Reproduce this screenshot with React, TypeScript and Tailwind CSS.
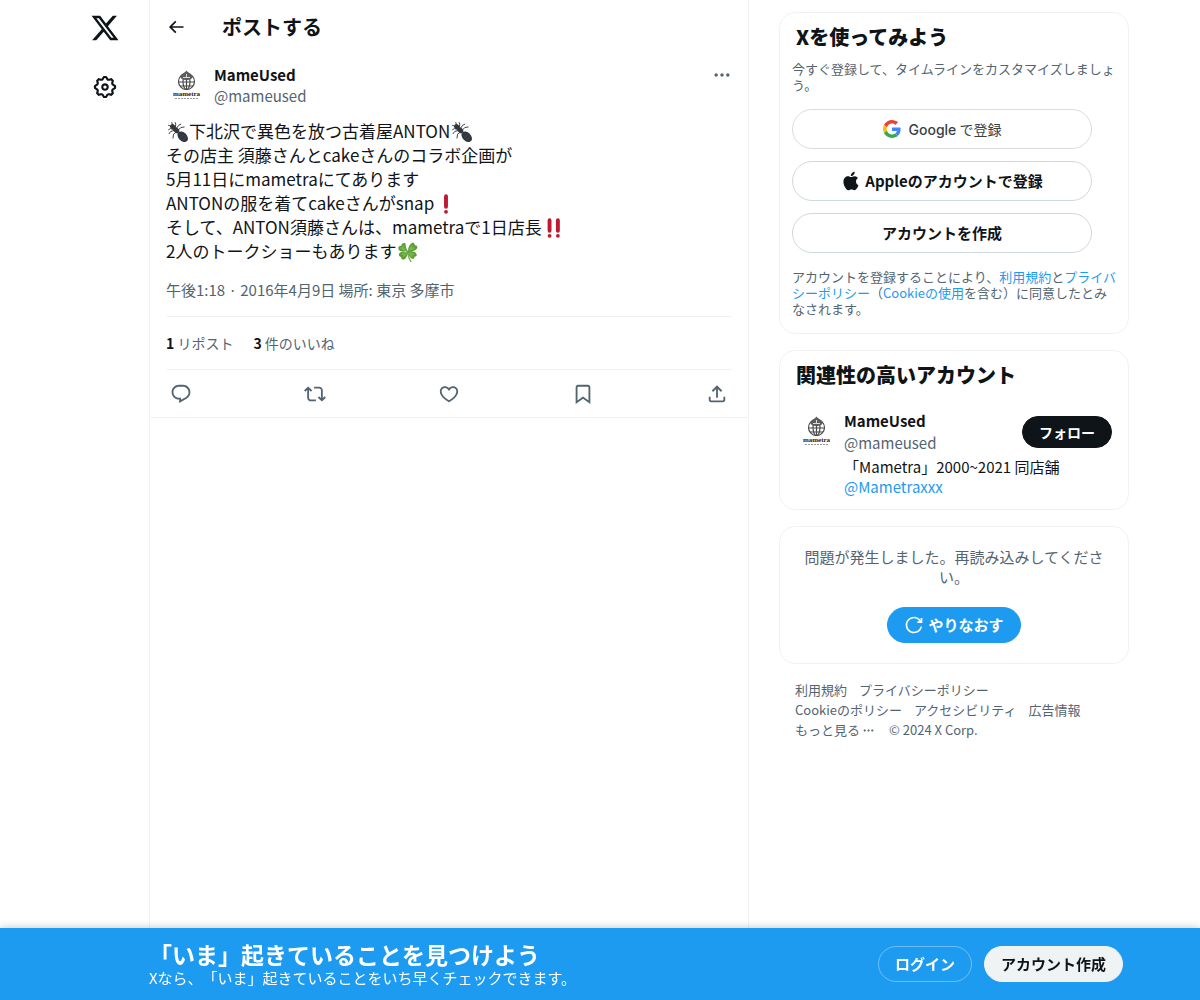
import React from 'react';

interface IconProps {
  path: string;
  className?: string;
}

const Icon: React.FC<IconProps> = ({ path, className = 'w-5 h-5' }) => (
  <svg viewBox="0 0 24 24" aria-hidden="true" className={`${className} shrink-0 fill-current`}>
    <path d={path} />
  </svg>
);

const paths = {
  logo: 'M18.244 2.25h3.308l-7.227 8.26 8.502 11.24H16.17l-5.214-6.817L4.99 21.75H1.68l7.73-8.835L1.254 2.25H8.08l4.713 6.231zm-1.161 17.52h1.833L7.084 4.126H5.117z',
  settings:
    'M10.54 1.75h2.92l1.57 2.36c.11.17.32.25.53.21l2.53-.59 2.17 2.17-.58 2.54c-.05.2.04.41.21.53l2.36 1.57v2.92l-2.36 1.57c-.17.12-.26.33-.21.53l.58 2.54-2.17 2.17-2.53-.59c-.21-.04-.42.04-.53.21l-1.57 2.36h-2.92l-1.58-2.36c-.11-.17-.32-.25-.52-.21l-2.54.59-2.17-2.17.58-2.54c.05-.2-.03-.41-.21-.53l-2.35-1.57v-2.92L4.1 8.97c.18-.12.26-.33.21-.53L3.73 5.9 5.9 3.73l2.54.59c.2.04.41-.04.52-.21l1.58-2.36zm1.07 2l-.98 1.47C10.05 6.08 9 6.5 7.99 6.27l-1.46-.34-.6.6.33 1.46c.24 1.01-.18 2.07-1.05 2.64l-1.46.98v.78l1.46.98c.87.57 1.29 1.63 1.05 2.64l-.33 1.46.6.6 1.46-.34c1.01-.23 2.06.19 2.64 1.05l.98 1.47h.78l.97-1.47c.58-.86 1.63-1.28 2.65-1.05l1.45.34.61-.6-.34-1.46c-.23-1.01.18-2.07 1.05-2.64l1.47-.98v-.78l-1.47-.98c-.87-.57-1.28-1.63-1.05-2.64l.34-1.46-.61-.6-1.45.34c-1.02.23-2.07-.19-2.65-1.05l-.97-1.47h-.78zM12 10.5c-.83 0-1.5.67-1.5 1.5s.67 1.5 1.5 1.5c.82 0 1.5-.67 1.5-1.5s-.68-1.5-1.5-1.5zM8.5 12c0-1.93 1.56-3.5 3.5-3.5 1.93 0 3.5 1.57 3.5 3.5s-1.57 3.5-3.5 3.5c-1.94 0-3.5-1.57-3.5-3.5z',
  back: 'M7.414 13l5.043 5.04-1.414 1.42L3.586 12l7.457-7.46 1.414 1.42L7.414 11H21v2H7.414z',
  more: 'M3 12c0-1.1.9-2 2-2s2 .9 2 2-.9 2-2 2-2-.9-2-2zm9 2c1.1 0 2-.9 2-2s-.9-2-2-2-2 .9-2 2 .9 2 2 2zm7 0c1.1 0 2-.9 2-2s-.9-2-2-2-2 .9-2 2 .9 2 2 2z',
  reply:
    'M1.751 10c0-4.42 3.584-8 8.005-8h4.366c4.49 0 8.129 3.64 8.129 8.13 0 2.96-1.607 5.68-4.196 7.11l-8.054 4.46v-3.69h-.067c-4.49.1-8.183-3.51-8.183-8.01zm8.005-6c-3.317 0-6.005 2.69-6.005 6 0 3.37 2.77 6.08 6.138 6.01l.351-.01h1.761v2.3l5.087-2.81c1.951-1.08 3.163-3.13 3.163-5.36 0-3.39-2.744-6.13-6.129-6.13H9.756z',
  repost:
    'M4.5 3.88l4.432 4.14-1.364 1.46L5.5 7.55V16c0 1.1.896 2 2 2H13v2H7.5c-2.209 0-4-1.79-4-4V7.55L1.432 9.48.068 8.02 4.5 3.88zM16.5 6H11V4h5.5c2.209 0 4 1.79 4 4v8.45l2.068-1.93 1.364 1.46-4.432 4.14-4.432-4.14 1.364-1.46 2.068 1.93V8c0-1.1-.896-2-2-2z',
  like: 'M16.697 5.5c-1.222-.06-2.679.51-3.89 2.16l-.805 1.09-.806-1.09C9.984 6.01 8.526 5.44 7.304 5.5c-1.243.07-2.349.78-2.91 1.91-.552 1.12-.633 2.78.479 4.82 1.074 1.97 3.257 4.27 7.129 6.61 3.87-2.34 6.052-4.64 7.126-6.61 1.111-2.04 1.03-3.7.477-4.82-.561-1.13-1.666-1.84-2.908-1.91zm4.187 7.69c-1.351 2.48-4.001 5.12-8.379 7.67l-.503.3-.504-.3c-4.379-2.55-7.029-5.19-8.382-7.67-1.36-2.5-1.41-4.86-.514-6.67.887-1.79 2.647-2.91 4.601-3.01 1.651-.09 3.368.56 4.798 2.01 1.429-1.45 3.146-2.1 4.796-2.01 1.954.1 3.714 1.22 4.601 3.01.896 1.81.846 4.17-.514 6.67z',
  bookmark:
    'M4 4.5C4 3.12 5.119 2 6.5 2h11C18.881 2 20 3.12 20 4.5v18.44l-8-5.71-8 5.71V4.5zM6.5 4c-.276 0-.5.22-.5.5v14.56l6-4.29 6 4.29V4.5c0-.28-.224-.5-.5-.5h-11z',
  share:
    'M12 2.59l5.7 5.7-1.41 1.42L13 6.41V16h-2V6.41l-3.3 3.3-1.41-1.42L12 2.59zM21 15l-.02 3.51c0 1.38-1.12 2.49-2.5 2.49H5.5C4.11 21 3 19.88 3 18.5V15h2v3.5c0 .28.22.5.5.5h12.98c.28 0 .5-.22.5-.5L19 15h2z',
  retry:
    'M12 4c-4.418 0-8 3.58-8 8s3.582 8 8 8c3.806 0 6.993-2.66 7.802-6.22l1.95.44C20.742 18.67 16.76 22 12 22 6.477 22 2 17.52 2 12S6.477 2 12 2c3.272 0 6.176 1.57 8 4V3.5h2v6h-6v-2h2.616C17.175 5.39 14.749 4 12 4z',
  apple:
    'M16.365 1.43c0 1.14-.493 2.27-1.177 3.08-.744.9-1.99 1.57-2.987 1.57-.12 0-.23-.02-.3-.03-.01-.06-.04-.22-.04-.39 0-1.15.572-2.27 1.206-2.98.804-.94 2.142-1.64 3.248-1.68.03.13.05.28.05.43zm4.565 15.71c-.03.07-.463 1.58-1.518 3.12-.945 1.34-1.94 2.71-3.43 2.71-1.517 0-1.9-.88-3.63-.88-1.698 0-2.302.91-3.67.91-1.377 0-2.332-1.26-3.428-2.8-1.287-1.82-2.323-4.63-2.323-7.28 0-4.28 2.797-6.55 5.552-6.55 1.448 0 2.675.95 3.6.95.865 0 2.222-1.01 3.902-1.01.613 0 2.886.06 4.374 2.19-.13.09-2.383 1.37-2.383 4.19 0 3.26 2.854 4.42 2.955 4.45z',
};

const GoogleIcon = () => (
  <svg viewBox="0 0 48 48" aria-hidden="true" className="w-[18px] h-[18px] shrink-0">
    <path fill="#EA4335" d="M24 9.5c3.54 0 6.71 1.22 9.21 3.6l6.85-6.85C35.9 2.38 30.47 0 24 0 14.62 0 6.51 5.38 2.56 13.22l7.98 6.19C12.43 13.72 17.74 9.5 24 9.5z" />
    <path fill="#4285F4" d="M46.98 24.55c0-1.57-.15-3.09-.38-4.55H24v9.02h12.94c-.58 2.96-2.26 5.48-4.78 7.18l7.73 6c4.51-4.18 7.09-10.36 7.09-17.65z" />
    <path fill="#FBBC05" d="M10.53 28.59c-.48-1.45-.76-2.99-.76-4.59s.27-3.14.76-4.59l-7.98-6.19C.92 16.46 0 20.12 0 24c0 3.88.92 7.54 2.56 10.78l7.97-6.19z" />
    <path fill="#34A853" d="M24 48c6.48 0 11.93-2.13 15.89-5.81l-7.73-6c-2.15 1.45-4.92 2.3-8.16 2.3-6.26 0-11.57-4.22-13.47-9.91l-7.98 6.19C6.51 42.62 14.62 48 24 48z" />
  </svg>
);

const emojiClass = 'inline-block w-5 h-5 ml-0.5 mr-px align-[-4px]';

const Ant = () => (
  <svg viewBox="0 0 36 36" role="img" aria-label="アリ" className={emojiClass}>
    <g fill="none" stroke="#31373D" strokeWidth="1.7" strokeLinecap="round" strokeLinejoin="round">
      <path d="M6 8L1 6M8 6L7 1" />
      <path d="M10 13l-6-1-3 2M12 15l-7 2-3 4M15 18l-5 4-1 7" />
      <path d="M13 10l1-6-1-3M15 12l4-6 4-2M18 15l5-5 6-1" />
    </g>
    <ellipse cx="8.500" cy="8.500" rx="5" ry="4.400" transform="rotate(45 8.500 8.500)" fill="#31373D" />
    <ellipse cx="15" cy="15" rx="6" ry="4.400" transform="rotate(45 15 15)" fill="#31373D" />
    <ellipse cx="26.500" cy="26.500" rx="11" ry="7.600" transform="rotate(45 26.500 26.500)" fill="#31373D" />
    <path d="M22 29l7-7M26 33l7-7" stroke="#55606a" strokeWidth="0.800" />
  </svg>
);

const Exclamation = () => (
  <svg viewBox="0 0 36 36" role="img" aria-label="!" className={emojiClass}>
    <circle cx="18" cy="32" r="3.400" fill="#BE1931" />
    <path d="M21.500 23a3.500 3.500 0 0 1-7 0V4a3.500 3.500 0 0 1 7 0z" fill="#BE1931" />
  </svg>
);

const DoubleExclamation = () => (
  <svg viewBox="0 0 36 36" role="img" aria-label="!!" className={emojiClass}>
    <circle cx="10" cy="32" r="3.400" fill="#BE1931" />
    <circle cx="25" cy="32" r="3.400" fill="#BE1931" />
    <path
      d="M13.500 23a3.500 3.500 0 0 1-7 0V4a3.500 3.500 0 0 1 7 0zM28.500 23a3.500 3.500 0 0 1-7 0V4a3.500 3.500 0 0 1 7 0z"
      fill="#BE1931"
    />
  </svg>
);

const Clover = () => (
  <svg viewBox="0 0 36 36" role="img" aria-label="四つ葉" className={emojiClass}>
    <path d="M17 17c1 7 2 12 6 18" fill="none" stroke="#77B255" strokeWidth="2.500" strokeLinecap="round" />
    <path
      d="M18 17C15 12 13 7 14 3c-3-3-8-1-8 4-5-1-7 4-4 8 4 3 10 3 16 2zM18 17c0-7 3-13 7-15 3-2 6 1 5 4 4-1 6 3 4 6-3 4-9 5-16 5zM18 17c-1 7-3 12-6 14-4 2-7-1-6-4-4 0-6-4-3-7 3-3 9-4 15-3zM18 17c7-1 13 0 15 4 2 3 0 6-3 5 0 4-4 6-7 3-3-3-5-7-5-12z"
      fill="#5C9E31"
    />
    <path
      d="M17 16C13 13 10 9 10 6c-2 0-3 2-2 4-2-1-4 0-4 2 4 3 8 4 13 4zM19 16c1-5 4-9 7-11 1 2 0 4-1 5 3-1 5 0 6 1-3 3-7 5-12 5zM17 18c-2 5-4 8-7 10-1-2-1-3 0-5-2 1-4 0-5-1 3-3 7-4 12-4zM19 18c5 0 9 2 11 4-1 2-3 2-4 1 1 2 0 4-2 4-3-2-4-5-5-9z"
      fill="#77B255"
    />
  </svg>
);

const Avatar = () => (
  <a href="#profile" aria-label="MameUsed" className="w-10 h-10 shrink-0 rounded-full overflow-hidden">
    <svg viewBox="0 0 40 40" className="w-10 h-10">
      <g fill="none" stroke="#4b4b4b" strokeWidth="1.2">
        <circle cx="20.500" cy="16.500" r="8" />
        <ellipse cx="20.500" cy="16.500" rx="3.500" ry="8" />
        <path d="M12.500 17h16M14 21h13M20.500 8v17" />
      </g>
      <path d="M20.500 5.500c2 3 6 3 6 6.500 0 2-3 3-6 3s-6-1-6-3c0-3.500 4-3.500 6-6.500z" fill="#5c5c5c" />
      <path d="M17 12.500h7M20.500 9v4" stroke="#ddd" strokeWidth="1" />
      <text x="20.500" y="31" textAnchor="middle" className="fill-[#222] font-['Liberation_Serif',serif] text-[7px] font-bold">
        mametra
      </text>
      <path d="M9 33.500h23" stroke="#999" strokeWidth="1" strokeDasharray="2 1" />
    </svg>
  </a>
);

const actions = [
  { label: '返信', path: paths.reply },
  { label: 'リポスト', path: paths.repost },
  { label: 'いいね', path: paths.like },
  { label: 'ブックマーク', path: paths.bookmark },
  { label: '共有', path: paths.share },
];

const Post = () => (
  <article className="border-b border-[#eff3f4] px-4">
    <div className="flex pt-3">
      <Avatar />
      <div className="ml-2 flex-1 space-y-px text-[15px] leading-5">
        <a href="#profile" className="block w-fit font-bold">MameUsed</a>
        <a href="#profile" className="block w-fit text-[#536471]">@mameused</a>
      </div>
      <button type="button" aria-label="もっと見る" className="h-5 text-[#536471]">
        <Icon path={paths.more} />
      </button>
    </div>

    <p className="mt-[13px] text-[17px] leading-6">
      <Ant />下北沢で異色を放つ古着屋ANTON<Ant />
      <br />
      その店主 須藤さんとcakeさんのコラボ企画が
      <br />
      5月11日にmametraにてあります
      <br />
      ANTONの服を着てcakeさんがsnap<Exclamation />
      <br />
      そして、ANTON須藤さんは、mametraで1日店長<DoubleExclamation />
      <br />
      2人のトークショーもあります<Clover />
    </p>

    <p className="mt-[17px] mb-4 text-[15px] leading-5 text-[#536471]">
      <a href="#post">午後1:18 · 2016年4月9日</a> 場所: <a href="#place">東京 多摩市</a>
    </p>

    <div className="flex gap-5 border-y border-[#eff3f4] py-4 text-[14px] leading-5 text-[#536471]">
      <a href="#reposts"><b className="text-[#0f1419]">1</b> リポスト</a>
      <a href="#likes"><b className="text-[#0f1419]">3</b> 件のいいね</a>
    </div>

    <div className="flex h-[47px] items-center justify-between px-1 text-[#536471]">
      {actions.map((action) => (
        <button key={action.label} type="button" aria-label={action.label}>
          <Icon path={action.path} className="w-[22px] h-[22px]" />
        </button>
      ))}
    </div>
  </article>
);

const cardClass = 'rounded-2xl border border-[#eff3f4]';
const signupButtonClass =
  'flex h-10 w-[300px] max-w-full items-center justify-center rounded-full border border-[#cfd9de] text-[15px] font-bold';

const SignupCard = () => (
  <section className={`${cardClass} px-3 pt-3 pb-4`}>
    <h2 className="px-1 text-[20px] leading-6 font-extrabold">Xを使ってみよう</h2>
    <p className="mt-3 text-[13px] leading-4 text-[#536471]">
      今すぐ登録して、タイムラインをカスタマイズしましょう。
    </p>
    <div className="my-4 flex flex-col gap-3">
      <button
        type="button"
        className="flex h-10 w-[300px] max-w-full items-center justify-center gap-2 rounded-full border border-[#dadce0] text-[14px] text-[#3c4043]"
      >
        <GoogleIcon />
        <span>
          <span className="font-['Inter'] font-medium">Google</span> で登録
        </span>
      </button>
      <button type="button" className={`${signupButtonClass} gap-1`}>
        <Icon path={paths.apple} />
        Appleのアカウントで登録
      </button>
      <button type="button" className={signupButtonClass}>アカウントを作成</button>
    </div>
    <p className="text-[13px] leading-4 text-[#536471]">
      アカウントを登録することにより、<a href="#tos" className="text-[#1d9bf0]">利用規約</a>と
      <a href="#privacy" className="text-[#1d9bf0]">プライバシーポリシー</a>（
      <a href="#cookies" className="text-[#1d9bf0]">Cookieの使用</a>を含む）に同意したとみなされます。
    </p>
  </section>
);

const RelatedCard = () => (
  <section className={`${cardClass} px-4 pt-3 pb-3`}>
    <h2 className="text-[20px] leading-6 font-extrabold">関連性の高いアカウント</h2>
    <div className="mt-6 flex">
      <Avatar />
      <div className="ml-2 flex-1 text-[15px] leading-5">
        <div className="flex items-center justify-between">
          <div className="space-y-0.5">
            <a href="#profile" className="block w-fit font-bold">MameUsed</a>
            <a href="#profile" className="block w-fit text-[#536471]">@mameused</a>
          </div>
          <button
            type="button"
            className="h-8 rounded-full border border-[#0f1419] bg-[#0f1419] px-4 text-[14px] font-bold text-white"
          >
            フォロー
          </button>
        </div>
        <p className="mt-1">
          「Mametra」2000~2021 同店舗
          <br />
          <a href="#mametraxxx" className="text-[#1d9bf0]">@Mametraxxx</a>
        </p>
      </div>
    </div>
  </section>
);

const ErrorCard = () => (
  <section className={`${cardClass} flex flex-col items-center p-5 text-[15px]`}>
    <p className="text-center leading-5 text-[#536471]">
      問題が発生しました。再読み込みしてください。
    </p>
    <button
      type="button"
      className="mt-5 flex h-9 items-center gap-1 rounded-full border border-[#1d9bf0] bg-[#1d9bf0] px-4 font-bold text-white"
    >
      <Icon path={paths.retry} />
      やりなおす
    </button>
  </section>
);

const footerLinks = [
  '利用規約',
  'プライバシーポリシー',
  'Cookieのポリシー',
  'アクセシビリティ',
  '広告情報',
];

const FooterLinks = () => (
  <nav aria-label="フッター" className="flex flex-wrap px-4 text-[13px] leading-5 text-[#536471]">
    {footerLinks.map((link) => (
      <a key={link} href="#footer" className="mr-3">{link}</a>
    ))}
    <button type="button" className="mr-3.5 flex items-center gap-0.5">
      もっと見る
      <Icon path={paths.more} className="w-[13px] h-[13px]" />
    </button>
    <span>© 2024 X Corp.</span>
  </nav>
);

const LoginBar = () => (
  <div className="fixed inset-x-0 bottom-0 flex h-[72px] justify-center bg-[#1d9bf0] text-white shadow-[0_0_8px_rgba(0,0,0,0.25)]">
    <div className="w-[88px] shrink" />
    <div className="flex w-[990px] items-center justify-between pr-4">
      <div>
        <p className="text-[23px] leading-7 font-bold">「いま」起きていることを見つけよう</p>
        <p className="text-[15px] leading-5">Xなら、「いま」起きていることをいち早くチェックできます。</p>
      </div>
      <div className="flex gap-3 text-[15px] font-bold">
        <button type="button" className="h-9 rounded-full border border-white/35 px-4">ログイン</button>
        <button
          type="button"
          className="h-9 rounded-full border border-[#eff3f4] bg-[#eff3f4] px-4 text-[#0f1419]"
        >
          アカウント作成
        </button>
      </div>
    </div>
  </div>
);

const App: React.FC = () => {
  return (
    <div
      lang="ja"
      className="flex min-h-screen justify-center bg-white font-['Noto_Sans_CJK_JP',sans-serif] text-[#0f1419] [text-spacing-trim:space-all]"
    >
      <header className="flex w-[88px] flex-col items-center gap-[31px] pt-[13px]">
        <a href="#home" aria-label="X">
          <Icon path={paths.logo} className="w-[30px] h-[30px]" />
        </a>
        <a href="#settings" aria-label="設定">
          <Icon path={paths.settings} className="w-[26px] h-[26px]" />
        </a>
      </header>

      <div className="flex w-[990px] gap-[30px]">
        <main className="w-[600px] border-x border-[#eff3f4]">
          <div className="flex h-[53px] items-center px-4">
            <button type="button" aria-label="戻る" className="w-14">
              <Icon path={paths.back} />
            </button>
            <h1 className="text-[20px] leading-6 font-bold">ポストする</h1>
          </div>
          <Post />
        </main>

        <aside className="flex w-[350px] flex-col gap-4 pt-3">
          <SignupCard />
          <RelatedCard />
          <ErrorCard />
          <FooterLinks />
        </aside>
      </div>

      <LoginBar />
    </div>
  );
};

export default App;
